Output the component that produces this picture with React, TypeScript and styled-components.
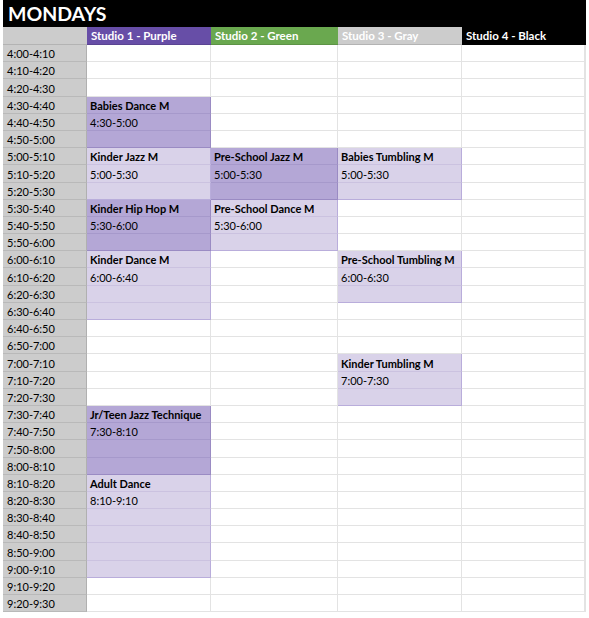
import React from "react";
import styled, { createGlobalStyle } from "styled-components";

const Global = createGlobalStyle`
  html, body { margin: 0; padding: 0; background: #ffffff; }
  body { font-family: Lato, "Liberation Sans", sans-serif; }
`;

type Tone = "none" | "dark" | "light";

interface Event {
  start: number;
  span: number;
  name: string;
  time: string;
  tone: Tone;
}

interface Studio {
  label: string;
  bg: string;
  events: Event[];
}

const times: string[] = (() => {
  const out: string[] = [];
  let h = 4;
  let m = 0;
  for (let i = 0; i < 33; i++) {
    let h2 = h;
    let m2 = m + 10;
    if (m2 === 60) {
      m2 = 0;
      h2 = h + 1;
    }
    const f = (hh: number, mm: number) => `${hh}:${mm.toString().padStart(2, "0")}`;
    out.push(`${f(h, m)}-${f(h2, m2)}`);
    h = h2;
    m = m2;
  }
  return out;
})();

const studios: Studio[] = [
  {
    label: "Studio 1 - Purple",
    bg: "#674ea7",
    events: [
      { start: 3, span: 3, name: "Babies Dance M", time: "4:30-5:00", tone: "dark" },
      { start: 6, span: 3, name: "Kinder Jazz M", time: "5:00-5:30", tone: "light" },
      { start: 9, span: 3, name: "Kinder Hip Hop M", time: "5:30-6:00", tone: "dark" },
      { start: 12, span: 4, name: "Kinder Dance M", time: "6:00-6:40", tone: "light" },
      { start: 21, span: 4, name: "Jr/Teen Jazz Technique", time: "7:30-8:10", tone: "dark" },
      { start: 25, span: 6, name: "Adult Dance", time: "8:10-9:10", tone: "light" },
    ],
  },
  {
    label: "Studio 2 - Green",
    bg: "#6aa84f",
    events: [
      { start: 6, span: 3, name: "Pre-School Jazz M", time: "5:00-5:30", tone: "dark" },
      { start: 9, span: 3, name: "Pre-School Dance M", time: "5:30-6:00", tone: "light" },
    ],
  },
  {
    label: "Studio 3 - Gray",
    bg: "#cccccc",
    events: [
      { start: 6, span: 3, name: "Babies Tumbling M", time: "5:00-5:30", tone: "light" },
      { start: 12, span: 3, name: "Pre-School Tumbling M", time: "6:00-6:30", tone: "light" },
      { start: 18, span: 3, name: "Kinder Tumbling M", time: "7:00-7:30", tone: "light" },
    ],
  },
  {
    label: "Studio 4 - Black",
    bg: "#000000",
    events: [],
  },
];

const toneBg: Record<Tone, string> = {
  none: "#ffffff",
  dark: "#b4a7d6",
  light: "#d9d2e9",
};

const toneLine: Record<Tone, string> = {
  none: "#e3e3e3",
  dark: "#a699cb",
  light: "#cbc2e0",
};

const toneEdge: Record<Tone, string> = {
  none: "#e3e3e3",
  dark: "#9a8bc3",
  light: "#b9addb",
};

const Page = styled.div`
  padding: 0 0 0 3px;
`;

const Sheet = styled.div`
  display: grid;
  width: 583px;
  grid-template-columns: 84px 124px 127px 124px 124px;
  grid-template-rows: 27px 18px repeat(33, 17.2px);
  font-size: 11px;
  color: #000000;
`;

const Title = styled.div`
  grid-column: 1 / -1;
  background: #000000;
  color: #ffffff;
  font-family: Lato, "Liberation Sans", sans-serif;
  font-weight: 700;
  font-size: 19.5px;
  line-height: 1;
  display: flex;
  align-items: flex-end;
  padding: 0 0 4px 5px;
  box-sizing: border-box;
`;

const HeadCell = styled.div<{ $bg: string }>`
  background: ${(p) => p.$bg};
  color: #ffffff;
  font-weight: 700;
  font-size: 11.5px;
  display: flex;
  align-items: flex-end;
  padding: 0 0 2px 4px;
  box-sizing: border-box;
  border-bottom: 1px solid ${(p) => (p.$bg === "#000000" ? "#000000" : "rgba(0,0,0,0.12)")};
  white-space: nowrap;
  overflow: hidden;
`;

const TimeCell = styled.div`
  background: #cccccc;
  border-bottom: 1px solid #b9b9b9;
  border-right: 1px solid #b0b0b0;
  display: flex;
  align-items: flex-end;
  padding: 0 0 1px 4px;
  box-sizing: border-box;
  white-space: nowrap;
  overflow: hidden;
`;

const SlotCell = styled.div<{ $tone: Tone; $last: boolean; $edgeRight: boolean }>`
  background: ${(p) => toneBg[p.$tone]};
  border-bottom: 1px solid ${(p) => (p.$last ? toneEdge[p.$tone] : toneLine[p.$tone])};
  border-right: ${(p) => (p.$edgeRight ? 2 : 1)}px solid
    ${(p) => (p.$tone === "none" ? "#e3e3e3" : toneEdge[p.$tone])};
  display: flex;
  align-items: flex-end;
  padding: 0 0 1px 3px;
  box-sizing: border-box;
  white-space: nowrap;
  overflow: hidden;
`;

const ClassName = styled.span`
  font-weight: 700;
`;

const ClassTime = styled.span`
  font-weight: 400;
`;

function findEvent(s: Studio, row: number): Event | undefined {
  return s.events.find((e) => row >= e.start && row < e.start + e.span);
}

export default function App() {
  return (
    <Page>
      <Global />
      <Sheet>
        <Title>MONDAYS</Title>
        <HeadCell $bg="#cccccc" />
        {studios.map((s) => (
          <HeadCell key={s.label} $bg={s.bg}>
            {s.label}
          </HeadCell>
        ))}
        {times.map((t, row) => (
          <React.Fragment key={t}>
            <TimeCell>{t}</TimeCell>
            {studios.map((s, si) => {
              const ev = findEvent(s, row);
              const tone: Tone = ev ? ev.tone : "none";
              const offset = ev ? row - ev.start : -1;
              const last = ev ? offset === ev.span - 1 : false;
              return (
                <SlotCell key={s.label} $tone={tone} $last={last} $edgeRight={si === studios.length - 1}>
                  {offset === 0 && ev && <ClassName>{ev.name}</ClassName>}
                  {offset === 1 && ev && <ClassTime>{ev.time}</ClassTime>}
                </SlotCell>
              );
            })}
          </React.Fragment>
        ))}
      </Sheet>
    </Page>
  );
}
